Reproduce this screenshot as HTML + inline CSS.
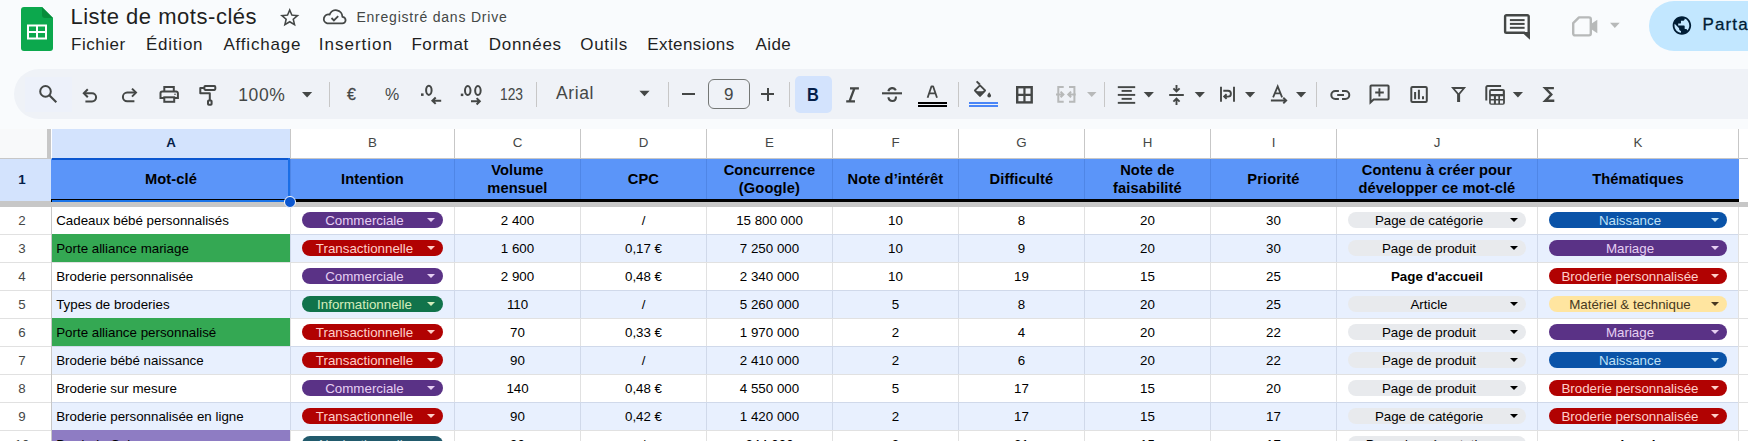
<!DOCTYPE html>
<html><head><meta charset="utf-8"><style>
html,body{margin:0;padding:0;}
body{width:1748px;height:441px;overflow:hidden;position:relative;background:#f9fbfd;font-family:'Liberation Sans', sans-serif;}
.t{position:absolute;white-space:nowrap;line-height:1;}
.c{text-align:center;}
.cc{display:flex;align-items:center;justify-content:center;text-align:center;}
.r{position:absolute;}
.s{position:absolute;overflow:visible;}
</style></head><body>
<svg class="s" style="left:21px;top:7px;" width="32" height="44" viewBox="0 0 32 44">
<path d="M3 0 H21 L32 11 V41 A3 3 0 0 1 29 44 H3 A3 3 0 0 1 0 41 V3 A3 3 0 0 1 3 0 Z" fill="#0ca84d"/>
<path d="M21 0 L32 11 H24 A3 3 0 0 1 21 8 Z" fill="#078c3b"/>
<rect x="6" y="17.5" width="20" height="15" fill="#fff"/>
<rect x="8" y="19.5" width="7" height="4.5" fill="#0ca84d"/>
<rect x="17" y="19.5" width="7" height="4.5" fill="#0ca84d"/>
<rect x="8" y="26" width="7" height="4.5" fill="#0ca84d"/>
<rect x="17" y="26" width="7" height="4.5" fill="#0ca84d"/>
</svg><div class="t" style="left:70.40px;top:6.38px;font-size:22px;color:#1f1f1f;font-weight:normal;letter-spacing:0.523px;">Liste de mots-clés</div><div class="t" style="left:356.40px;top:9.55px;font-size:14px;color:#444746;font-weight:normal;letter-spacing:0.785px;">Enregistré dans Drive</div><div class="t" style="left:71.00px;top:36.31px;font-size:17px;color:#1f1f1f;font-weight:normal;letter-spacing:0.517px;">Fichier</div><div class="t" style="left:146.00px;top:36.31px;font-size:17px;color:#1f1f1f;font-weight:normal;letter-spacing:0.766px;">Édition</div><div class="t" style="left:223.40px;top:36.31px;font-size:17px;color:#1f1f1f;font-weight:normal;letter-spacing:0.825px;">Affichage</div><div class="t" style="left:318.80px;top:36.31px;font-size:17px;color:#1f1f1f;font-weight:normal;letter-spacing:0.989px;">Insertion</div><div class="t" style="left:411.40px;top:36.31px;font-size:17px;color:#1f1f1f;font-weight:normal;letter-spacing:0.6px;">Format</div><div class="t" style="left:488.80px;top:36.31px;font-size:17px;color:#1f1f1f;font-weight:normal;letter-spacing:0.7px;">Données</div><div class="t" style="left:580.20px;top:36.31px;font-size:17px;color:#1f1f1f;font-weight:normal;letter-spacing:0.74px;">Outils</div><div class="t" style="left:647.20px;top:36.31px;font-size:17px;color:#1f1f1f;font-weight:normal;letter-spacing:0.433px;">Extensions</div><div class="t" style="left:755.60px;top:36.31px;font-size:17px;color:#1f1f1f;font-weight:normal;letter-spacing:0.4px;">Aide</div><div class="r" style="left:1648.7px;top:1px;width:140px;height:50px;background:#c2e7ff;border-radius:25px;"></div><div class="t" style="left:1702.60px;top:16.01px;font-size:17px;color:#001d35;font-weight:normal;letter-spacing:1.1px;-webkit-text-stroke:0.3px #001d35;">Partager</div><div class="r" style="left:14px;top:69px;width:1800px;height:50px;background:#eff2f7;border-radius:25px;"></div><div class="r" style="left:25px;top:77px;width:47px;height:35px;background:#edf1fa;"></div><div class="t" style="left:238.20px;top:87.19px;font-size:17.5px;color:#444746;font-weight:normal;letter-spacing:0.633px;">100%</div><div class="r" style="left:329px;top:82px;width:1px;height:25px;background:#c7c7c7;"></div><div class="t" style="left:347.00px;top:87.46px;font-size:16px;color:#444746;font-weight:normal;letter-spacing:4.5px;-webkit-text-stroke:0.3px #444746;">€</div><div class="t" style="left:385.00px;top:87.46px;font-size:16px;color:#444746;font-weight:normal;letter-spacing:-1.8px;">%</div><div class="t" style="left:499.6px;top:86.6px;font-size:15.8px;color:#444746;transform:scaleX(0.875);transform-origin:0 0">123</div><div class="r" style="left:536px;top:82px;width:1px;height:25px;background:#c7c7c7;"></div><div class="t" style="left:556.00px;top:85.39px;font-size:17.5px;color:#444746;font-weight:normal;letter-spacing:0.6px;">Arial</div><div class="r" style="left:668px;top:82px;width:1px;height:25px;background:#c7c7c7;"></div><div class="r" style="left:682px;top:93px;width:13px;height:2px;background:#444746;"></div><div class="r" style="left:708px;top:79px;width:40px;height:28px;border:1px solid #747775;border-radius:6px;"></div><div class="t" style="left:724.00px;top:86.01px;font-size:17px;color:#444746;font-weight:normal;letter-spacing:0.0px;">9</div><div class="r" style="left:761px;top:93px;width:13px;height:2px;background:#444746;"></div><div class="r" style="left:766.5px;top:87.5px;width:2px;height:13px;background:#444746;"></div><div class="r" style="left:789px;top:82px;width:1px;height:25px;background:#c7c7c7;"></div><div class="r" style="left:795px;top:76px;width:37px;height:37px;background:#d3e3fd;border-radius:5px;"></div><div class="t" style="left:806.6px;top:85.2px;font-size:19px;line-height:1;font-weight:bold;color:#041e49;transform:scaleX(0.86);transform-origin:0 0">B</div><div class="r" style="left:918px;top:101.5px;width:29px;height:2px;background:#000;"></div><div class="r" style="left:918px;top:104.5px;width:29px;height:2.5px;background:#000;"></div><div class="r" style="left:958px;top:82px;width:1px;height:25px;background:#c7c7c7;"></div><div class="r" style="left:969px;top:102px;width:29px;height:1.9px;background:#4a86f7;"></div><div class="r" style="left:969px;top:105.2px;width:29px;height:1.7px;background:#4a86f7;"></div><div class="r" style="left:1104px;top:82px;width:1px;height:25px;background:#c7c7c7;"></div><div class="r" style="left:1316px;top:82px;width:1px;height:25px;background:#c7c7c7;"></div><div class="r" style="left:0px;top:129px;width:1748px;height:29px;background:#ffffff;"></div><div class="r" style="left:0px;top:129px;width:47px;height:29px;background:#f8f9fa;"></div><div class="r" style="left:47px;top:129px;width:4px;height:29px;background:#c7c7c7;"></div><div class="r" style="left:52px;top:129px;width:238px;height:29px;background:#d3e3fd;"></div><div class="r" style="left:290px;top:129px;width:1px;height:29px;background:#c7c7c7;"></div><div class="r" style="left:454px;top:129px;width:1px;height:29px;background:#c7c7c7;"></div><div class="r" style="left:580px;top:129px;width:1px;height:29px;background:#c7c7c7;"></div><div class="r" style="left:706px;top:129px;width:1px;height:29px;background:#c7c7c7;"></div><div class="r" style="left:832px;top:129px;width:1px;height:29px;background:#c7c7c7;"></div><div class="r" style="left:958px;top:129px;width:1px;height:29px;background:#c7c7c7;"></div><div class="r" style="left:1084px;top:129px;width:1px;height:29px;background:#c7c7c7;"></div><div class="r" style="left:1210px;top:129px;width:1px;height:29px;background:#c7c7c7;"></div><div class="r" style="left:1336px;top:129px;width:1px;height:29px;background:#c7c7c7;"></div><div class="r" style="left:1537px;top:129px;width:1px;height:29px;background:#c7c7c7;"></div><div class="r" style="left:1738px;top:129px;width:1px;height:29px;background:#c7c7c7;"></div><div class="r" style="left:0px;top:158px;width:1748px;height:1px;background:#c7c7c7;"></div><div class="t c" style="left:51.5px;top:128.0px;width:239px;height:29px;line-height:29px;font-size:13.33px;font-weight:bold;color:#041e49">A</div><div class="t c" style="left:290.5px;top:128.0px;width:164px;height:29px;line-height:29px;font-size:13.33px;font-weight:normal;color:#444746">B</div><div class="t c" style="left:454.5px;top:128.0px;width:126px;height:29px;line-height:29px;font-size:13.33px;font-weight:normal;color:#444746">C</div><div class="t c" style="left:580.5px;top:128.0px;width:126px;height:29px;line-height:29px;font-size:13.33px;font-weight:normal;color:#444746">D</div><div class="t c" style="left:706.5px;top:128.0px;width:126px;height:29px;line-height:29px;font-size:13.33px;font-weight:normal;color:#444746">E</div><div class="t c" style="left:832.5px;top:128.0px;width:126px;height:29px;line-height:29px;font-size:13.33px;font-weight:normal;color:#444746">F</div><div class="t c" style="left:958.5px;top:128.0px;width:126px;height:29px;line-height:29px;font-size:13.33px;font-weight:normal;color:#444746">G</div><div class="t c" style="left:1084.5px;top:128.0px;width:126px;height:29px;line-height:29px;font-size:13.33px;font-weight:normal;color:#444746">H</div><div class="t c" style="left:1210.5px;top:128.0px;width:126px;height:29px;line-height:29px;font-size:13.33px;font-weight:normal;color:#444746">I</div><div class="t c" style="left:1336.5px;top:128.0px;width:201px;height:29px;line-height:29px;font-size:13.33px;font-weight:normal;color:#444746">J</div><div class="t c" style="left:1537.5px;top:128.0px;width:201px;height:29px;line-height:29px;font-size:13.33px;font-weight:normal;color:#444746">K</div><div class="r" style="left:0px;top:159px;width:51px;height:42px;background:#d3e3fd;"></div><div class="t c" style="left:0px;top:157.5px;width:44px;height:43px;line-height:43px;font-size:13.33px;font-weight:bold;color:#041e49">1</div><div class="r" style="left:51px;top:159px;width:1688px;height:43px;background:#5b95f9;"></div><div class="r" style="left:1739px;top:159px;width:9px;height:43px;background:#ffffff;"></div><div class="r" style="left:290px;top:159px;width:1px;height:43px;background:#4f86e6;"></div><div class="r" style="left:454px;top:159px;width:1px;height:43px;background:#4f86e6;"></div><div class="r" style="left:580px;top:159px;width:1px;height:43px;background:#4f86e6;"></div><div class="r" style="left:706px;top:159px;width:1px;height:43px;background:#4f86e6;"></div><div class="r" style="left:832px;top:159px;width:1px;height:43px;background:#4f86e6;"></div><div class="r" style="left:958px;top:159px;width:1px;height:43px;background:#4f86e6;"></div><div class="r" style="left:1084px;top:159px;width:1px;height:43px;background:#4f86e6;"></div><div class="r" style="left:1210px;top:159px;width:1px;height:43px;background:#4f86e6;"></div><div class="r" style="left:1336px;top:159px;width:1px;height:43px;background:#4f86e6;"></div><div class="r" style="left:1537px;top:159px;width:1px;height:43px;background:#4f86e6;"></div><div class="r" style="left:51px;top:199px;width:1688px;height:3px;background:#000;"></div><div class="t cc" style="left:51.4px;top:159.7px;width:239px;height:40px;font-size:14.67px;line-height:17.4px;letter-spacing:0.1px;font-weight:bold;color:#000">Mot-clé</div><div class="t cc" style="left:290.4px;top:159.7px;width:164px;height:40px;font-size:14.67px;line-height:17.4px;letter-spacing:0.1px;font-weight:bold;color:#000">Intention</div><div class="t cc" style="left:454.4px;top:159.7px;width:126px;height:40px;font-size:14.67px;line-height:17.4px;letter-spacing:0.1px;font-weight:bold;color:#000">Volume<br>mensuel</div><div class="t cc" style="left:580.4px;top:159.7px;width:126px;height:40px;font-size:14.67px;line-height:17.4px;letter-spacing:0.1px;font-weight:bold;color:#000">CPC</div><div class="t cc" style="left:706.4px;top:159.7px;width:126px;height:40px;font-size:14.67px;line-height:17.4px;letter-spacing:0.1px;font-weight:bold;color:#000">Concurrence<br>(Google)</div><div class="t cc" style="left:832.4px;top:159.7px;width:126px;height:40px;font-size:14.67px;line-height:17.4px;letter-spacing:0.1px;font-weight:bold;color:#000">Note d’intérêt</div><div class="t cc" style="left:958.4px;top:159.7px;width:126px;height:40px;font-size:14.67px;line-height:17.4px;letter-spacing:0.1px;font-weight:bold;color:#000">Difficulté</div><div class="t cc" style="left:1084.4px;top:159.7px;width:126px;height:40px;font-size:14.67px;line-height:17.4px;letter-spacing:0.1px;font-weight:bold;color:#000">Note de<br>faisabilité</div><div class="t cc" style="left:1210.4px;top:159.7px;width:126px;height:40px;font-size:14.67px;line-height:17.4px;letter-spacing:0.1px;font-weight:bold;color:#000">Priorité</div><div class="t cc" style="left:1336.4px;top:159.7px;width:201px;height:40px;font-size:14.67px;line-height:17.4px;letter-spacing:0.1px;font-weight:bold;color:#000">Contenu à créer pour<br>développer ce mot-clé</div><div class="t cc" style="left:1537.4px;top:159.7px;width:201px;height:40px;font-size:14.67px;line-height:17.4px;letter-spacing:0.1px;font-weight:bold;color:#000">Thématiques</div><div class="r" style="left:0px;top:206px;width:51px;height:28px;background:#ffffff;"></div><div class="r" style="left:0px;top:206px;width:51px;height:1px;background:#e1e1e1;"></div><div class="t cc" style="left:0px;top:207px;width:44px;height:27px;font-size:13.33px;color:#444746">2</div><div class="r" style="left:51px;top:206px;width:1687px;height:28px;background:#ffffff;"></div><div class="r" style="left:290px;top:206px;width:1px;height:28px;background:#e1e1e1;"></div><div class="r" style="left:454px;top:206px;width:1px;height:28px;background:#e1e1e1;"></div><div class="r" style="left:580px;top:206px;width:1px;height:28px;background:#e1e1e1;"></div><div class="r" style="left:706px;top:206px;width:1px;height:28px;background:#e1e1e1;"></div><div class="r" style="left:832px;top:206px;width:1px;height:28px;background:#e1e1e1;"></div><div class="r" style="left:958px;top:206px;width:1px;height:28px;background:#e1e1e1;"></div><div class="r" style="left:1084px;top:206px;width:1px;height:28px;background:#e1e1e1;"></div><div class="r" style="left:1210px;top:206px;width:1px;height:28px;background:#e1e1e1;"></div><div class="r" style="left:1336px;top:206px;width:1px;height:28px;background:#e1e1e1;"></div><div class="r" style="left:1537px;top:206px;width:1px;height:28px;background:#e1e1e1;"></div><div class="r" style="left:51px;top:206px;width:1px;height:28px;background:#c7c7c7;"></div><div class="r" style="left:1738px;top:206px;width:1px;height:28px;background:#e1e1e1;"></div><div class="r" style="left:1739px;top:206px;width:9px;height:28px;background:#ffffff;"></div><div class="t" style="left:56.2px;top:206.5px;height:28px;line-height:28px;font-size:13.33px;color:#000">Cadeaux bébé personnalisés</div><div class="r" style="left:302px;top:212px;width:141px;height:16px;background:#5a3286;border-radius:8px;"></div><div class="t cc" style="left:302px;top:212.5px;width:125px;height:16px;font-size:13.33px;line-height:16px;color:#e6cff2">Commerciale</div><svg class="s" style="left:427px;top:218px" width="8" height="4" viewBox="0 0 8 4"><path d="M0 0 H8 L4 4 Z" fill="#e6cff2"/></svg><div class="t cc" style="left:454.5px;top:207.5px;width:126px;height:27px;font-size:13.33px;color:#000">2 400</div><div class="t cc" style="left:580.5px;top:207.5px;width:126px;height:27px;font-size:13.33px;color:#000">/</div><div class="t cc" style="left:706.5px;top:207.5px;width:126px;height:27px;font-size:13.33px;color:#000">15 800 000</div><div class="t cc" style="left:832.5px;top:207.5px;width:126px;height:27px;font-size:13.33px;color:#000">10</div><div class="t cc" style="left:958.5px;top:207.5px;width:126px;height:27px;font-size:13.33px;color:#000">8</div><div class="t cc" style="left:1084.5px;top:207.5px;width:126px;height:27px;font-size:13.33px;color:#000">20</div><div class="t cc" style="left:1210.5px;top:207.5px;width:126px;height:27px;font-size:13.33px;color:#000">30</div><div class="r" style="left:1348px;top:212px;width:178px;height:16px;background:#e8eaed;border-radius:8px;"></div><div class="t cc" style="left:1348px;top:212.5px;width:162px;height:16px;font-size:13.33px;line-height:16px;color:#000000">Page de catégorie</div><svg class="s" style="left:1510px;top:218px" width="8" height="4" viewBox="0 0 8 4"><path d="M0 0 H8 L4 4 Z" fill="#000000"/></svg><div class="r" style="left:1549px;top:212px;width:178px;height:16px;background:#0a53a8;border-radius:8px;"></div><div class="t cc" style="left:1549px;top:212.5px;width:162px;height:16px;font-size:13.33px;line-height:16px;color:#bfe1f6">Naissance</div><svg class="s" style="left:1711px;top:218px" width="8" height="4" viewBox="0 0 8 4"><path d="M0 0 H8 L4 4 Z" fill="#bfe1f6"/></svg><div class="r" style="left:0px;top:234px;width:51px;height:28px;background:#ffffff;"></div><div class="r" style="left:0px;top:234px;width:51px;height:1px;background:#e1e1e1;"></div><div class="t cc" style="left:0px;top:235px;width:44px;height:27px;font-size:13.33px;color:#444746">3</div><div class="r" style="left:51px;top:234px;width:1687px;height:28px;background:#e8f0fe;"></div><div class="r" style="left:51px;top:234px;width:1687px;height:1px;background:#d0d9ea;"></div><div class="r" style="left:290px;top:234px;width:1px;height:28px;background:#d0d9ea;"></div><div class="r" style="left:454px;top:234px;width:1px;height:28px;background:#d0d9ea;"></div><div class="r" style="left:580px;top:234px;width:1px;height:28px;background:#d0d9ea;"></div><div class="r" style="left:706px;top:234px;width:1px;height:28px;background:#d0d9ea;"></div><div class="r" style="left:832px;top:234px;width:1px;height:28px;background:#d0d9ea;"></div><div class="r" style="left:958px;top:234px;width:1px;height:28px;background:#d0d9ea;"></div><div class="r" style="left:1084px;top:234px;width:1px;height:28px;background:#d0d9ea;"></div><div class="r" style="left:1210px;top:234px;width:1px;height:28px;background:#d0d9ea;"></div><div class="r" style="left:1336px;top:234px;width:1px;height:28px;background:#d0d9ea;"></div><div class="r" style="left:1537px;top:234px;width:1px;height:28px;background:#d0d9ea;"></div><div class="r" style="left:51px;top:234px;width:1px;height:28px;background:#c7c7c7;"></div><div class="r" style="left:1738px;top:234px;width:1px;height:28px;background:#e1e1e1;"></div><div class="r" style="left:1739px;top:234px;width:9px;height:28px;background:#ffffff;"></div><div class="r" style="left:1739px;top:234px;width:9px;height:1px;background:#e1e1e1;"></div><div class="r" style="left:52px;top:234px;width:238px;height:28px;background:#34a853;"></div><div class="t" style="left:56.2px;top:234.5px;height:28px;line-height:28px;font-size:13.33px;color:#000">Porte alliance mariage</div><div class="r" style="left:302px;top:240px;width:141px;height:16px;background:#b10202;border-radius:8px;"></div><div class="t cc" style="left:302px;top:240.5px;width:125px;height:16px;font-size:13.33px;line-height:16px;color:#ffcfc9">Transactionnelle</div><svg class="s" style="left:427px;top:246px" width="8" height="4" viewBox="0 0 8 4"><path d="M0 0 H8 L4 4 Z" fill="#ffcfc9"/></svg><div class="t cc" style="left:454.5px;top:235.5px;width:126px;height:27px;font-size:13.33px;color:#000">1 600</div><div class="t cc" style="left:580.5px;top:235.5px;width:126px;height:27px;font-size:13.33px;color:#000">0,17 €</div><div class="t cc" style="left:706.5px;top:235.5px;width:126px;height:27px;font-size:13.33px;color:#000">7 250 000</div><div class="t cc" style="left:832.5px;top:235.5px;width:126px;height:27px;font-size:13.33px;color:#000">10</div><div class="t cc" style="left:958.5px;top:235.5px;width:126px;height:27px;font-size:13.33px;color:#000">9</div><div class="t cc" style="left:1084.5px;top:235.5px;width:126px;height:27px;font-size:13.33px;color:#000">20</div><div class="t cc" style="left:1210.5px;top:235.5px;width:126px;height:27px;font-size:13.33px;color:#000">30</div><div class="r" style="left:1348px;top:240px;width:178px;height:16px;background:#e8eaed;border-radius:8px;"></div><div class="t cc" style="left:1348px;top:240.5px;width:162px;height:16px;font-size:13.33px;line-height:16px;color:#000000">Page de produit</div><svg class="s" style="left:1510px;top:246px" width="8" height="4" viewBox="0 0 8 4"><path d="M0 0 H8 L4 4 Z" fill="#000000"/></svg><div class="r" style="left:1549px;top:240px;width:178px;height:16px;background:#5a3286;border-radius:8px;"></div><div class="t cc" style="left:1549px;top:240.5px;width:162px;height:16px;font-size:13.33px;line-height:16px;color:#e6cff2">Mariage</div><svg class="s" style="left:1711px;top:246px" width="8" height="4" viewBox="0 0 8 4"><path d="M0 0 H8 L4 4 Z" fill="#e6cff2"/></svg><div class="r" style="left:0px;top:262px;width:51px;height:28px;background:#ffffff;"></div><div class="r" style="left:0px;top:262px;width:51px;height:1px;background:#e1e1e1;"></div><div class="t cc" style="left:0px;top:263px;width:44px;height:27px;font-size:13.33px;color:#444746">4</div><div class="r" style="left:51px;top:262px;width:1687px;height:28px;background:#ffffff;"></div><div class="r" style="left:51px;top:262px;width:1687px;height:1px;background:#e1e1e1;"></div><div class="r" style="left:290px;top:262px;width:1px;height:28px;background:#e1e1e1;"></div><div class="r" style="left:454px;top:262px;width:1px;height:28px;background:#e1e1e1;"></div><div class="r" style="left:580px;top:262px;width:1px;height:28px;background:#e1e1e1;"></div><div class="r" style="left:706px;top:262px;width:1px;height:28px;background:#e1e1e1;"></div><div class="r" style="left:832px;top:262px;width:1px;height:28px;background:#e1e1e1;"></div><div class="r" style="left:958px;top:262px;width:1px;height:28px;background:#e1e1e1;"></div><div class="r" style="left:1084px;top:262px;width:1px;height:28px;background:#e1e1e1;"></div><div class="r" style="left:1210px;top:262px;width:1px;height:28px;background:#e1e1e1;"></div><div class="r" style="left:1336px;top:262px;width:1px;height:28px;background:#e1e1e1;"></div><div class="r" style="left:1537px;top:262px;width:1px;height:28px;background:#e1e1e1;"></div><div class="r" style="left:51px;top:262px;width:1px;height:28px;background:#c7c7c7;"></div><div class="r" style="left:1738px;top:262px;width:1px;height:28px;background:#e1e1e1;"></div><div class="r" style="left:1739px;top:262px;width:9px;height:28px;background:#ffffff;"></div><div class="r" style="left:1739px;top:262px;width:9px;height:1px;background:#e1e1e1;"></div><div class="t" style="left:56.2px;top:262.5px;height:28px;line-height:28px;font-size:13.33px;color:#000">Broderie personnalisée</div><div class="r" style="left:302px;top:268px;width:141px;height:16px;background:#5a3286;border-radius:8px;"></div><div class="t cc" style="left:302px;top:268.5px;width:125px;height:16px;font-size:13.33px;line-height:16px;color:#e6cff2">Commerciale</div><svg class="s" style="left:427px;top:274px" width="8" height="4" viewBox="0 0 8 4"><path d="M0 0 H8 L4 4 Z" fill="#e6cff2"/></svg><div class="t cc" style="left:454.5px;top:263.5px;width:126px;height:27px;font-size:13.33px;color:#000">2 900</div><div class="t cc" style="left:580.5px;top:263.5px;width:126px;height:27px;font-size:13.33px;color:#000">0,48 €</div><div class="t cc" style="left:706.5px;top:263.5px;width:126px;height:27px;font-size:13.33px;color:#000">2 340 000</div><div class="t cc" style="left:832.5px;top:263.5px;width:126px;height:27px;font-size:13.33px;color:#000">10</div><div class="t cc" style="left:958.5px;top:263.5px;width:126px;height:27px;font-size:13.33px;color:#000">19</div><div class="t cc" style="left:1084.5px;top:263.5px;width:126px;height:27px;font-size:13.33px;color:#000">15</div><div class="t cc" style="left:1210.5px;top:263.5px;width:126px;height:27px;font-size:13.33px;color:#000">25</div><div class="t cc" style="left:1336.5px;top:263.5px;width:201px;height:27px;font-size:13.33px;font-weight:bold;color:#000">Page d'accueil</div><div class="r" style="left:1549px;top:268px;width:178px;height:16px;background:#b10202;border-radius:8px;"></div><div class="t cc" style="left:1549px;top:268.5px;width:162px;height:16px;font-size:13.33px;line-height:16px;color:#ffcfc9">Broderie personnalisée</div><svg class="s" style="left:1711px;top:274px" width="8" height="4" viewBox="0 0 8 4"><path d="M0 0 H8 L4 4 Z" fill="#ffcfc9"/></svg><div class="r" style="left:0px;top:290px;width:51px;height:28px;background:#ffffff;"></div><div class="r" style="left:0px;top:290px;width:51px;height:1px;background:#e1e1e1;"></div><div class="t cc" style="left:0px;top:291px;width:44px;height:27px;font-size:13.33px;color:#444746">5</div><div class="r" style="left:51px;top:290px;width:1687px;height:28px;background:#e8f0fe;"></div><div class="r" style="left:51px;top:290px;width:1687px;height:1px;background:#d0d9ea;"></div><div class="r" style="left:290px;top:290px;width:1px;height:28px;background:#d0d9ea;"></div><div class="r" style="left:454px;top:290px;width:1px;height:28px;background:#d0d9ea;"></div><div class="r" style="left:580px;top:290px;width:1px;height:28px;background:#d0d9ea;"></div><div class="r" style="left:706px;top:290px;width:1px;height:28px;background:#d0d9ea;"></div><div class="r" style="left:832px;top:290px;width:1px;height:28px;background:#d0d9ea;"></div><div class="r" style="left:958px;top:290px;width:1px;height:28px;background:#d0d9ea;"></div><div class="r" style="left:1084px;top:290px;width:1px;height:28px;background:#d0d9ea;"></div><div class="r" style="left:1210px;top:290px;width:1px;height:28px;background:#d0d9ea;"></div><div class="r" style="left:1336px;top:290px;width:1px;height:28px;background:#d0d9ea;"></div><div class="r" style="left:1537px;top:290px;width:1px;height:28px;background:#d0d9ea;"></div><div class="r" style="left:51px;top:290px;width:1px;height:28px;background:#c7c7c7;"></div><div class="r" style="left:1738px;top:290px;width:1px;height:28px;background:#e1e1e1;"></div><div class="r" style="left:1739px;top:290px;width:9px;height:28px;background:#ffffff;"></div><div class="r" style="left:1739px;top:290px;width:9px;height:1px;background:#e1e1e1;"></div><div class="t" style="left:56.2px;top:290.5px;height:28px;line-height:28px;font-size:13.33px;color:#000">Types de broderies</div><div class="r" style="left:302px;top:296px;width:141px;height:16px;background:#11734b;border-radius:8px;"></div><div class="t cc" style="left:302px;top:296.5px;width:125px;height:16px;font-size:13.33px;line-height:16px;color:#d4edbc">Informationnelle</div><svg class="s" style="left:427px;top:302px" width="8" height="4" viewBox="0 0 8 4"><path d="M0 0 H8 L4 4 Z" fill="#d4edbc"/></svg><div class="t cc" style="left:454.5px;top:291.5px;width:126px;height:27px;font-size:13.33px;color:#000">110</div><div class="t cc" style="left:580.5px;top:291.5px;width:126px;height:27px;font-size:13.33px;color:#000">/</div><div class="t cc" style="left:706.5px;top:291.5px;width:126px;height:27px;font-size:13.33px;color:#000">5 260 000</div><div class="t cc" style="left:832.5px;top:291.5px;width:126px;height:27px;font-size:13.33px;color:#000">5</div><div class="t cc" style="left:958.5px;top:291.5px;width:126px;height:27px;font-size:13.33px;color:#000">8</div><div class="t cc" style="left:1084.5px;top:291.5px;width:126px;height:27px;font-size:13.33px;color:#000">20</div><div class="t cc" style="left:1210.5px;top:291.5px;width:126px;height:27px;font-size:13.33px;color:#000">25</div><div class="r" style="left:1348px;top:296px;width:178px;height:16px;background:#e8eaed;border-radius:8px;"></div><div class="t cc" style="left:1348px;top:296.5px;width:162px;height:16px;font-size:13.33px;line-height:16px;color:#000000">Article</div><svg class="s" style="left:1510px;top:302px" width="8" height="4" viewBox="0 0 8 4"><path d="M0 0 H8 L4 4 Z" fill="#000000"/></svg><div class="r" style="left:1549px;top:296px;width:178px;height:16px;background:#ffe5a0;border-radius:8px;"></div><div class="t cc" style="left:1549px;top:296.5px;width:162px;height:16px;font-size:13.33px;line-height:16px;color:#473821">Matériel & technique</div><svg class="s" style="left:1711px;top:302px" width="8" height="4" viewBox="0 0 8 4"><path d="M0 0 H8 L4 4 Z" fill="#473821"/></svg><div class="r" style="left:0px;top:318px;width:51px;height:28px;background:#ffffff;"></div><div class="r" style="left:0px;top:318px;width:51px;height:1px;background:#e1e1e1;"></div><div class="t cc" style="left:0px;top:319px;width:44px;height:27px;font-size:13.33px;color:#444746">6</div><div class="r" style="left:51px;top:318px;width:1687px;height:28px;background:#ffffff;"></div><div class="r" style="left:51px;top:318px;width:1687px;height:1px;background:#e1e1e1;"></div><div class="r" style="left:290px;top:318px;width:1px;height:28px;background:#e1e1e1;"></div><div class="r" style="left:454px;top:318px;width:1px;height:28px;background:#e1e1e1;"></div><div class="r" style="left:580px;top:318px;width:1px;height:28px;background:#e1e1e1;"></div><div class="r" style="left:706px;top:318px;width:1px;height:28px;background:#e1e1e1;"></div><div class="r" style="left:832px;top:318px;width:1px;height:28px;background:#e1e1e1;"></div><div class="r" style="left:958px;top:318px;width:1px;height:28px;background:#e1e1e1;"></div><div class="r" style="left:1084px;top:318px;width:1px;height:28px;background:#e1e1e1;"></div><div class="r" style="left:1210px;top:318px;width:1px;height:28px;background:#e1e1e1;"></div><div class="r" style="left:1336px;top:318px;width:1px;height:28px;background:#e1e1e1;"></div><div class="r" style="left:1537px;top:318px;width:1px;height:28px;background:#e1e1e1;"></div><div class="r" style="left:51px;top:318px;width:1px;height:28px;background:#c7c7c7;"></div><div class="r" style="left:1738px;top:318px;width:1px;height:28px;background:#e1e1e1;"></div><div class="r" style="left:1739px;top:318px;width:9px;height:28px;background:#ffffff;"></div><div class="r" style="left:1739px;top:318px;width:9px;height:1px;background:#e1e1e1;"></div><div class="r" style="left:52px;top:318px;width:238px;height:28px;background:#34a853;"></div><div class="t" style="left:56.2px;top:318.5px;height:28px;line-height:28px;font-size:13.33px;color:#000">Porte alliance personnalisé</div><div class="r" style="left:302px;top:324px;width:141px;height:16px;background:#b10202;border-radius:8px;"></div><div class="t cc" style="left:302px;top:324.5px;width:125px;height:16px;font-size:13.33px;line-height:16px;color:#ffcfc9">Transactionnelle</div><svg class="s" style="left:427px;top:330px" width="8" height="4" viewBox="0 0 8 4"><path d="M0 0 H8 L4 4 Z" fill="#ffcfc9"/></svg><div class="t cc" style="left:454.5px;top:319.5px;width:126px;height:27px;font-size:13.33px;color:#000">70</div><div class="t cc" style="left:580.5px;top:319.5px;width:126px;height:27px;font-size:13.33px;color:#000">0,33 €</div><div class="t cc" style="left:706.5px;top:319.5px;width:126px;height:27px;font-size:13.33px;color:#000">1 970 000</div><div class="t cc" style="left:832.5px;top:319.5px;width:126px;height:27px;font-size:13.33px;color:#000">2</div><div class="t cc" style="left:958.5px;top:319.5px;width:126px;height:27px;font-size:13.33px;color:#000">4</div><div class="t cc" style="left:1084.5px;top:319.5px;width:126px;height:27px;font-size:13.33px;color:#000">20</div><div class="t cc" style="left:1210.5px;top:319.5px;width:126px;height:27px;font-size:13.33px;color:#000">22</div><div class="r" style="left:1348px;top:324px;width:178px;height:16px;background:#e8eaed;border-radius:8px;"></div><div class="t cc" style="left:1348px;top:324.5px;width:162px;height:16px;font-size:13.33px;line-height:16px;color:#000000">Page de produit</div><svg class="s" style="left:1510px;top:330px" width="8" height="4" viewBox="0 0 8 4"><path d="M0 0 H8 L4 4 Z" fill="#000000"/></svg><div class="r" style="left:1549px;top:324px;width:178px;height:16px;background:#5a3286;border-radius:8px;"></div><div class="t cc" style="left:1549px;top:324.5px;width:162px;height:16px;font-size:13.33px;line-height:16px;color:#e6cff2">Mariage</div><svg class="s" style="left:1711px;top:330px" width="8" height="4" viewBox="0 0 8 4"><path d="M0 0 H8 L4 4 Z" fill="#e6cff2"/></svg><div class="r" style="left:0px;top:346px;width:51px;height:28px;background:#ffffff;"></div><div class="r" style="left:0px;top:346px;width:51px;height:1px;background:#e1e1e1;"></div><div class="t cc" style="left:0px;top:347px;width:44px;height:27px;font-size:13.33px;color:#444746">7</div><div class="r" style="left:51px;top:346px;width:1687px;height:28px;background:#e8f0fe;"></div><div class="r" style="left:51px;top:346px;width:1687px;height:1px;background:#d0d9ea;"></div><div class="r" style="left:290px;top:346px;width:1px;height:28px;background:#d0d9ea;"></div><div class="r" style="left:454px;top:346px;width:1px;height:28px;background:#d0d9ea;"></div><div class="r" style="left:580px;top:346px;width:1px;height:28px;background:#d0d9ea;"></div><div class="r" style="left:706px;top:346px;width:1px;height:28px;background:#d0d9ea;"></div><div class="r" style="left:832px;top:346px;width:1px;height:28px;background:#d0d9ea;"></div><div class="r" style="left:958px;top:346px;width:1px;height:28px;background:#d0d9ea;"></div><div class="r" style="left:1084px;top:346px;width:1px;height:28px;background:#d0d9ea;"></div><div class="r" style="left:1210px;top:346px;width:1px;height:28px;background:#d0d9ea;"></div><div class="r" style="left:1336px;top:346px;width:1px;height:28px;background:#d0d9ea;"></div><div class="r" style="left:1537px;top:346px;width:1px;height:28px;background:#d0d9ea;"></div><div class="r" style="left:51px;top:346px;width:1px;height:28px;background:#c7c7c7;"></div><div class="r" style="left:1738px;top:346px;width:1px;height:28px;background:#e1e1e1;"></div><div class="r" style="left:1739px;top:346px;width:9px;height:28px;background:#ffffff;"></div><div class="r" style="left:1739px;top:346px;width:9px;height:1px;background:#e1e1e1;"></div><div class="t" style="left:56.2px;top:346.5px;height:28px;line-height:28px;font-size:13.33px;color:#000">Broderie bébé naissance</div><div class="r" style="left:302px;top:352px;width:141px;height:16px;background:#b10202;border-radius:8px;"></div><div class="t cc" style="left:302px;top:352.5px;width:125px;height:16px;font-size:13.33px;line-height:16px;color:#ffcfc9">Transactionnelle</div><svg class="s" style="left:427px;top:358px" width="8" height="4" viewBox="0 0 8 4"><path d="M0 0 H8 L4 4 Z" fill="#ffcfc9"/></svg><div class="t cc" style="left:454.5px;top:347.5px;width:126px;height:27px;font-size:13.33px;color:#000">90</div><div class="t cc" style="left:580.5px;top:347.5px;width:126px;height:27px;font-size:13.33px;color:#000">/</div><div class="t cc" style="left:706.5px;top:347.5px;width:126px;height:27px;font-size:13.33px;color:#000">2 410 000</div><div class="t cc" style="left:832.5px;top:347.5px;width:126px;height:27px;font-size:13.33px;color:#000">2</div><div class="t cc" style="left:958.5px;top:347.5px;width:126px;height:27px;font-size:13.33px;color:#000">6</div><div class="t cc" style="left:1084.5px;top:347.5px;width:126px;height:27px;font-size:13.33px;color:#000">20</div><div class="t cc" style="left:1210.5px;top:347.5px;width:126px;height:27px;font-size:13.33px;color:#000">22</div><div class="r" style="left:1348px;top:352px;width:178px;height:16px;background:#e8eaed;border-radius:8px;"></div><div class="t cc" style="left:1348px;top:352.5px;width:162px;height:16px;font-size:13.33px;line-height:16px;color:#000000">Page de produit</div><svg class="s" style="left:1510px;top:358px" width="8" height="4" viewBox="0 0 8 4"><path d="M0 0 H8 L4 4 Z" fill="#000000"/></svg><div class="r" style="left:1549px;top:352px;width:178px;height:16px;background:#0a53a8;border-radius:8px;"></div><div class="t cc" style="left:1549px;top:352.5px;width:162px;height:16px;font-size:13.33px;line-height:16px;color:#bfe1f6">Naissance</div><svg class="s" style="left:1711px;top:358px" width="8" height="4" viewBox="0 0 8 4"><path d="M0 0 H8 L4 4 Z" fill="#bfe1f6"/></svg><div class="r" style="left:0px;top:374px;width:51px;height:28px;background:#ffffff;"></div><div class="r" style="left:0px;top:374px;width:51px;height:1px;background:#e1e1e1;"></div><div class="t cc" style="left:0px;top:375px;width:44px;height:27px;font-size:13.33px;color:#444746">8</div><div class="r" style="left:51px;top:374px;width:1687px;height:28px;background:#ffffff;"></div><div class="r" style="left:51px;top:374px;width:1687px;height:1px;background:#e1e1e1;"></div><div class="r" style="left:290px;top:374px;width:1px;height:28px;background:#e1e1e1;"></div><div class="r" style="left:454px;top:374px;width:1px;height:28px;background:#e1e1e1;"></div><div class="r" style="left:580px;top:374px;width:1px;height:28px;background:#e1e1e1;"></div><div class="r" style="left:706px;top:374px;width:1px;height:28px;background:#e1e1e1;"></div><div class="r" style="left:832px;top:374px;width:1px;height:28px;background:#e1e1e1;"></div><div class="r" style="left:958px;top:374px;width:1px;height:28px;background:#e1e1e1;"></div><div class="r" style="left:1084px;top:374px;width:1px;height:28px;background:#e1e1e1;"></div><div class="r" style="left:1210px;top:374px;width:1px;height:28px;background:#e1e1e1;"></div><div class="r" style="left:1336px;top:374px;width:1px;height:28px;background:#e1e1e1;"></div><div class="r" style="left:1537px;top:374px;width:1px;height:28px;background:#e1e1e1;"></div><div class="r" style="left:51px;top:374px;width:1px;height:28px;background:#c7c7c7;"></div><div class="r" style="left:1738px;top:374px;width:1px;height:28px;background:#e1e1e1;"></div><div class="r" style="left:1739px;top:374px;width:9px;height:28px;background:#ffffff;"></div><div class="r" style="left:1739px;top:374px;width:9px;height:1px;background:#e1e1e1;"></div><div class="t" style="left:56.2px;top:374.5px;height:28px;line-height:28px;font-size:13.33px;color:#000">Broderie sur mesure</div><div class="r" style="left:302px;top:380px;width:141px;height:16px;background:#5a3286;border-radius:8px;"></div><div class="t cc" style="left:302px;top:380.5px;width:125px;height:16px;font-size:13.33px;line-height:16px;color:#e6cff2">Commerciale</div><svg class="s" style="left:427px;top:386px" width="8" height="4" viewBox="0 0 8 4"><path d="M0 0 H8 L4 4 Z" fill="#e6cff2"/></svg><div class="t cc" style="left:454.5px;top:375.5px;width:126px;height:27px;font-size:13.33px;color:#000">140</div><div class="t cc" style="left:580.5px;top:375.5px;width:126px;height:27px;font-size:13.33px;color:#000">0,48 €</div><div class="t cc" style="left:706.5px;top:375.5px;width:126px;height:27px;font-size:13.33px;color:#000">4 550 000</div><div class="t cc" style="left:832.5px;top:375.5px;width:126px;height:27px;font-size:13.33px;color:#000">5</div><div class="t cc" style="left:958.5px;top:375.5px;width:126px;height:27px;font-size:13.33px;color:#000">17</div><div class="t cc" style="left:1084.5px;top:375.5px;width:126px;height:27px;font-size:13.33px;color:#000">15</div><div class="t cc" style="left:1210.5px;top:375.5px;width:126px;height:27px;font-size:13.33px;color:#000">20</div><div class="r" style="left:1348px;top:380px;width:178px;height:16px;background:#e8eaed;border-radius:8px;"></div><div class="t cc" style="left:1348px;top:380.5px;width:162px;height:16px;font-size:13.33px;line-height:16px;color:#000000">Page de produit</div><svg class="s" style="left:1510px;top:386px" width="8" height="4" viewBox="0 0 8 4"><path d="M0 0 H8 L4 4 Z" fill="#000000"/></svg><div class="r" style="left:1549px;top:380px;width:178px;height:16px;background:#b10202;border-radius:8px;"></div><div class="t cc" style="left:1549px;top:380.5px;width:162px;height:16px;font-size:13.33px;line-height:16px;color:#ffcfc9">Broderie personnalisée</div><svg class="s" style="left:1711px;top:386px" width="8" height="4" viewBox="0 0 8 4"><path d="M0 0 H8 L4 4 Z" fill="#ffcfc9"/></svg><div class="r" style="left:0px;top:402px;width:51px;height:28px;background:#ffffff;"></div><div class="r" style="left:0px;top:402px;width:51px;height:1px;background:#e1e1e1;"></div><div class="t cc" style="left:0px;top:403px;width:44px;height:27px;font-size:13.33px;color:#444746">9</div><div class="r" style="left:51px;top:402px;width:1687px;height:28px;background:#e8f0fe;"></div><div class="r" style="left:51px;top:402px;width:1687px;height:1px;background:#d0d9ea;"></div><div class="r" style="left:290px;top:402px;width:1px;height:28px;background:#d0d9ea;"></div><div class="r" style="left:454px;top:402px;width:1px;height:28px;background:#d0d9ea;"></div><div class="r" style="left:580px;top:402px;width:1px;height:28px;background:#d0d9ea;"></div><div class="r" style="left:706px;top:402px;width:1px;height:28px;background:#d0d9ea;"></div><div class="r" style="left:832px;top:402px;width:1px;height:28px;background:#d0d9ea;"></div><div class="r" style="left:958px;top:402px;width:1px;height:28px;background:#d0d9ea;"></div><div class="r" style="left:1084px;top:402px;width:1px;height:28px;background:#d0d9ea;"></div><div class="r" style="left:1210px;top:402px;width:1px;height:28px;background:#d0d9ea;"></div><div class="r" style="left:1336px;top:402px;width:1px;height:28px;background:#d0d9ea;"></div><div class="r" style="left:1537px;top:402px;width:1px;height:28px;background:#d0d9ea;"></div><div class="r" style="left:51px;top:402px;width:1px;height:28px;background:#c7c7c7;"></div><div class="r" style="left:1738px;top:402px;width:1px;height:28px;background:#e1e1e1;"></div><div class="r" style="left:1739px;top:402px;width:9px;height:28px;background:#ffffff;"></div><div class="r" style="left:1739px;top:402px;width:9px;height:1px;background:#e1e1e1;"></div><div class="t" style="left:56.2px;top:402.5px;height:28px;line-height:28px;font-size:13.33px;color:#000">Broderie personnalisée en ligne</div><div class="r" style="left:302px;top:408px;width:141px;height:16px;background:#b10202;border-radius:8px;"></div><div class="t cc" style="left:302px;top:408.5px;width:125px;height:16px;font-size:13.33px;line-height:16px;color:#ffcfc9">Transactionnelle</div><svg class="s" style="left:427px;top:414px" width="8" height="4" viewBox="0 0 8 4"><path d="M0 0 H8 L4 4 Z" fill="#ffcfc9"/></svg><div class="t cc" style="left:454.5px;top:403.5px;width:126px;height:27px;font-size:13.33px;color:#000">90</div><div class="t cc" style="left:580.5px;top:403.5px;width:126px;height:27px;font-size:13.33px;color:#000">0,42 €</div><div class="t cc" style="left:706.5px;top:403.5px;width:126px;height:27px;font-size:13.33px;color:#000">1 420 000</div><div class="t cc" style="left:832.5px;top:403.5px;width:126px;height:27px;font-size:13.33px;color:#000">2</div><div class="t cc" style="left:958.5px;top:403.5px;width:126px;height:27px;font-size:13.33px;color:#000">17</div><div class="t cc" style="left:1084.5px;top:403.5px;width:126px;height:27px;font-size:13.33px;color:#000">15</div><div class="t cc" style="left:1210.5px;top:403.5px;width:126px;height:27px;font-size:13.33px;color:#000">17</div><div class="r" style="left:1348px;top:408px;width:178px;height:16px;background:#e8eaed;border-radius:8px;"></div><div class="t cc" style="left:1348px;top:408.5px;width:162px;height:16px;font-size:13.33px;line-height:16px;color:#000000">Page de catégorie</div><svg class="s" style="left:1510px;top:414px" width="8" height="4" viewBox="0 0 8 4"><path d="M0 0 H8 L4 4 Z" fill="#000000"/></svg><div class="r" style="left:1549px;top:408px;width:178px;height:16px;background:#b10202;border-radius:8px;"></div><div class="t cc" style="left:1549px;top:408.5px;width:162px;height:16px;font-size:13.33px;line-height:16px;color:#ffcfc9">Broderie personnalisée</div><svg class="s" style="left:1711px;top:414px" width="8" height="4" viewBox="0 0 8 4"><path d="M0 0 H8 L4 4 Z" fill="#ffcfc9"/></svg><div class="r" style="left:0px;top:430px;width:51px;height:28px;background:#ffffff;"></div><div class="r" style="left:0px;top:430px;width:51px;height:1px;background:#e1e1e1;"></div><div class="t cc" style="left:0px;top:431px;width:44px;height:27px;font-size:13.33px;color:#444746">10</div><div class="r" style="left:51px;top:430px;width:1687px;height:28px;background:#ffffff;"></div><div class="r" style="left:51px;top:430px;width:1687px;height:1px;background:#e1e1e1;"></div><div class="r" style="left:290px;top:430px;width:1px;height:28px;background:#e1e1e1;"></div><div class="r" style="left:454px;top:430px;width:1px;height:28px;background:#e1e1e1;"></div><div class="r" style="left:580px;top:430px;width:1px;height:28px;background:#e1e1e1;"></div><div class="r" style="left:706px;top:430px;width:1px;height:28px;background:#e1e1e1;"></div><div class="r" style="left:832px;top:430px;width:1px;height:28px;background:#e1e1e1;"></div><div class="r" style="left:958px;top:430px;width:1px;height:28px;background:#e1e1e1;"></div><div class="r" style="left:1084px;top:430px;width:1px;height:28px;background:#e1e1e1;"></div><div class="r" style="left:1210px;top:430px;width:1px;height:28px;background:#e1e1e1;"></div><div class="r" style="left:1336px;top:430px;width:1px;height:28px;background:#e1e1e1;"></div><div class="r" style="left:1537px;top:430px;width:1px;height:28px;background:#e1e1e1;"></div><div class="r" style="left:51px;top:430px;width:1px;height:28px;background:#c7c7c7;"></div><div class="r" style="left:1738px;top:430px;width:1px;height:28px;background:#e1e1e1;"></div><div class="r" style="left:1739px;top:430px;width:9px;height:28px;background:#ffffff;"></div><div class="r" style="left:1739px;top:430px;width:9px;height:1px;background:#e1e1e1;"></div><div class="r" style="left:52px;top:430px;width:238px;height:28px;background:#8e7cc3;"></div><div class="t" style="left:56.2px;top:430.5px;height:28px;line-height:28px;font-size:13.33px;color:#000">Broderie Colmar</div><div class="r" style="left:302px;top:436px;width:141px;height:16px;background:#215a6c;border-radius:8px;"></div><div class="t cc" style="left:302px;top:436.5px;width:125px;height:16px;font-size:13.33px;line-height:16px;color:#c6dbe1">Navigationnelle</div><svg class="s" style="left:427px;top:442px" width="8" height="4" viewBox="0 0 8 4"><path d="M0 0 H8 L4 4 Z" fill="#c6dbe1"/></svg><div class="t cc" style="left:454.5px;top:431.5px;width:126px;height:27px;font-size:13.33px;color:#000">90</div><div class="t cc" style="left:580.5px;top:431.5px;width:126px;height:27px;font-size:13.33px;color:#000">/</div><div class="t cc" style="left:706.5px;top:431.5px;width:126px;height:27px;font-size:13.33px;color:#000">244 000</div><div class="t cc" style="left:832.5px;top:431.5px;width:126px;height:27px;font-size:13.33px;color:#000">3</div><div class="t cc" style="left:958.5px;top:431.5px;width:126px;height:27px;font-size:13.33px;color:#000">21</div><div class="t cc" style="left:1084.5px;top:431.5px;width:126px;height:27px;font-size:13.33px;color:#000">15</div><div class="t cc" style="left:1210.5px;top:431.5px;width:126px;height:27px;font-size:13.33px;color:#000">17</div><div class="r" style="left:1348px;top:436px;width:178px;height:16px;background:#e8eaed;border-radius:8px;"></div><div class="t cc" style="left:1348px;top:436.5px;width:162px;height:16px;font-size:13.33px;line-height:16px;color:#000000">Page de présentation</div><svg class="s" style="left:1510px;top:442px" width="8" height="4" viewBox="0 0 8 4"><path d="M0 0 H8 L4 4 Z" fill="#000000"/></svg><div class="t cc" style="left:1537.5px;top:431.5px;width:201px;height:27px;font-size:13.33px;font-weight:bold;color:#000">Local</div><div class="r" style="left:0px;top:201px;width:51px;height:6px;background:#c7c7c7;"></div><div class="r" style="left:51px;top:202px;width:1697px;height:5px;background:#c7c7c7;"></div><div class="r" style="left:52px;top:158px;width:238px;height:2px;background:#0b57d0;"></div><div class="r" style="left:288px;top:158px;width:2px;height:44px;background:#1a6ee6;"></div><div class="r" style="left:52px;top:200px;width:238px;height:2px;background:#1a73e8;"></div><div class="r" style="left:284px;top:196px;width:12px;height:12px;border-radius:50%;background:#0b57d0;border:1px solid #fff;box-sizing:border-box;"></div>
<svg style="position:absolute;left:0;top:0" width="1748" height="441" viewBox="0 0 1748 441"><path transform="translate(278.06 6.19) scale(0.97 0.953)" d="M22 9.24l-7.19-.62L12 2 9.19 8.63 2 9.24l5.46 4.73L5.82 21 12 17.27 18.18 21l-1.63-7.03L22 9.24zM12 15.4l-3.76 2.27 1-4.28-3.32-2.88 4.38-.38L12 6.1l1.71 4.04 4.38.38-3.32 2.88 1 4.28L12 15.4z" fill="#444746"/><path d="M327.2 23.4 H342.2 A3.3 3.3 0 0 0 342.4 16.8 A6.6 6.6 0 0 0 329.6 14.6 A4.4 4.4 0 0 0 327.2 23.4 Z" fill="none" stroke="#444746" stroke-width="1.8" stroke-linejoin="round"/><path d="M331.5 18 L333.9 20.4 L338.2 16.1" fill="none" stroke="#444746" stroke-width="1.8"/><path d="M1506.4 15.2 H1527.4 A1.3 1.3 0 0 1 1528.7 16.5 V37 L1524.2 32.8 H1506.4 A1.3 1.3 0 0 1 1505.1 31.5 V16.5 A1.3 1.3 0 0 1 1506.4 15.2 Z" fill="none" stroke="#444746" stroke-width="2.4" stroke-linejoin="miter"/><path d="M1524.4 32 L1529.9 39 V32 Z" fill="#444746"/><rect x="1509.9" y="19.1" width="14.7" height="2" fill="#444746"/><rect x="1509.9" y="22.9" width="14.7" height="2" fill="#444746"/><rect x="1509.9" y="26.8" width="14.7" height="2" fill="#444746"/><path d="M1579 17.4 H1589 A1.8 1.8 0 0 1 1590.8 19.2 V33.6 A1.8 1.8 0 0 1 1589 35.4 H1575 A1.8 1.8 0 0 1 1573.2 33.6 V23.2 Z" fill="none" stroke="#b7b9b9" stroke-width="2.4" stroke-linejoin="round"/><path d="M1591 24 L1597.3 19.8 V33.3 L1591 29 Z" fill="#b7b9b9"/><path d="M1610 22.7 H1619.7 L1614.85 28 Z" fill="#b7b9b9"/><path transform="translate(1670.8 14.3) scale(0.925)" d="M12 2C6.48 2 2 6.48 2 12s4.48 10 10 10 10-4.48 10-10S17.52 2 12 2zm-1 17.93c-3.95-.49-7-3.85-7-7.93 0-.62.08-1.21.21-1.79L9 15v1c0 1.1.9 2 2 2v1.93zm6.9-2.54c-.26-.81-1-1.39-1.9-1.39h-1v-3c0-.55-.45-1-1-1H8v-2h2c.55 0 1-.45 1-1V7h2c1.1 0 2-.9 2-2v-.41c2.93 1.19 5 4.06 5 7.41 0 2.08-.8 3.97-2.1 5.39z" fill="#001d35"/><circle cx="45.5" cy="91.4" r="5.3" fill="none" stroke="#444746" stroke-width="2"/><path d="M49.3 95.3 L56.3 102.3" stroke="#444746" stroke-width="2.1"/><path d="M87.8 89.2 L83.8 93.2 L87.8 97.2" fill="none" stroke="#444746" stroke-width="2"/><path d="M84 93.2 H92 A4.1 4.1 0 0 1 92 101.4 H85.4" fill="none" stroke="#444746" stroke-width="2"/><path d="M132 88.6 L136 92.6 L132 96.6" fill="none" stroke="#444746" stroke-width="2"/><path d="M135.8 92.6 H127.2 A4.3 4.3 0 0 0 127.2 101.2 H134.4" fill="none" stroke="#444746" stroke-width="2"/><path d="M164.3 91.2 V87.1 H173.8 V91.2" fill="none" stroke="#444746" stroke-width="2"/><path d="M164 98 H160.5 V93.2 A1.8 1.8 0 0 1 162.3 91.4 H176.1 A1.8 1.8 0 0 1 177.9 93.2 V98 H174.5" fill="none" stroke="#444746" stroke-width="2"/><rect x="164.3" y="97.3" width="9.9" height="4.5" fill="none" stroke="#444746" stroke-width="2"/><circle cx="175" cy="94.3" r="0.8" fill="#444746"/><rect x="204.4" y="86.1" width="10.9" height="3.8" rx="0.8" fill="none" stroke="#444746" stroke-width="2"/><path d="M204.4 88 H200.3 V93.3 H209.8 V100" fill="none" stroke="#444746" stroke-width="2" stroke-linejoin="round"/><rect x="208" y="100.5" width="3.6" height="4.3" rx="0.8" fill="none" stroke="#444746" stroke-width="2"/><path d="M302 92 H312.2 L307.1 97.4 Z" fill="#444746"/><rect x="421" y="93.4" width="2.6" height="2.5" fill="#444746"/><ellipse cx="428.85" cy="90.35" rx="2.75" ry="4.55" fill="none" stroke="#444746" stroke-width="2"/><path d="M441.2 100.7 H432.5 M435.7 97.5 L432.4 100.7 L435.7 103.9" fill="none" stroke="#444746" stroke-width="2"/><rect x="460.8" y="93.6" width="2.5" height="2.5" fill="#444746"/><ellipse cx="467.75" cy="90.6" rx="2.75" ry="4.5" fill="none" stroke="#444746" stroke-width="2"/><ellipse cx="477.9" cy="90.6" rx="2.75" ry="4.5" fill="none" stroke="#444746" stroke-width="2"/><path d="M471 101.3 H479.8 M476.6 98.1 L479.8 101.3 L476.6 104.5" fill="none" stroke="#444746" stroke-width="2"/><path d="M639.4 90.8 H649.6 L644.5 96.2 Z" fill="#444746"/><path d="M850 88.4 H858.9 M846.2 101.4 H855 M854.4 88.4 L849.5 101.4" fill="none" stroke="#444746" stroke-width="2.3"/><path d="M882 93.3 H902" stroke="#444746" stroke-width="2.1"/><path d="M888.4 91.3 A3.9 3.9 0 0 1 895.8 90.4" fill="none" stroke="#444746" stroke-width="2.1"/><path d="M888.3 97.2 C889 100.3 890.8 101 892.4 101 C894.6 101 896 99.6 896 96.4" fill="none" stroke="#444746" stroke-width="2.1"/><path d="M927.6 97.7 L931.5 86.3 H933.1 L937 97.7 M929.4 93.4 H935.2" fill="none" stroke="#444746" stroke-width="1.8" stroke-linejoin="round"/><path d="M976.6 81.3 L979.8 84.5" stroke="#444746" stroke-width="1.9"/><path d="M974.9 90.4 L980 85.3 L985.1 90.4 L980 95.5 Z" fill="none" stroke="#444746" stroke-width="1.9" stroke-linejoin="round"/><path d="M974.3 91.2 H985.7 L980 96.9 Z" fill="#444746"/><path d="M989.2 92.3 C988.2 93.8 987.3 94.8 987.3 95.6 A1.9 1.9 0 0 0 991.1 95.6 C991.1 94.8 990.2 93.8 989.2 92.3 Z" fill="#444746"/><rect x="1017.2" y="87.2" width="14.5" height="15.2" fill="none" stroke="#444746" stroke-width="2.4"/><path d="M1024.45 87 V102.6 M1017 94.8 H1031.9" stroke="#444746" stroke-width="2.2"/><path d="M1063.7 87 H1058.3 V101.8 H1063.7 M1069 87 H1074.4 V101.8 H1069" fill="none" stroke="#b7b9b9" stroke-width="2"/><path d="M1056 94.4 H1063.4 M1060.6 91.6 L1063.4 94.4 L1060.6 97.2 M1075.7 94.4 H1068.3 M1071.1 91.6 L1068.3 94.4 L1071.1 97.2" fill="none" stroke="#b7b9b9" stroke-width="2"/><path d="M1087 92 H1096.5 L1091.75 97 Z" fill="#b7b9b9"/><rect x="1117.8" y="86.2" width="17.4" height="1.9" fill="#444746"/><rect x="1121.6" y="89.95" width="10.2" height="1.9" fill="#444746"/><rect x="1117.8" y="93.95" width="17.4" height="1.9" fill="#444746"/><rect x="1121.6" y="97.89999999999999" width="10.2" height="1.9" fill="#444746"/><rect x="1117.8" y="101.89999999999999" width="17.4" height="1.9" fill="#444746"/><path d="M1143.7 92 H1153.9 L1148.8 97.4 Z" fill="#444746"/><rect x="1169.2" y="94" width="14.6" height="2" fill="#444746"/><path d="M1176.5 85 V91.5 M1173.4 88.4 L1176.5 91.5 L1179.6 88.4 M1176.5 105 V98.5 M1173.4 101.6 L1176.5 98.5 L1179.6 101.6" fill="none" stroke="#444746" stroke-width="1.9"/><path d="M1194.7 92 H1204.9 L1199.8 97.4 Z" fill="#444746"/><path d="M1221 86.8 V101.8 M1234 86.8 V101.8" stroke="#444746" stroke-width="1.9"/><path d="M1223.3 90.8 H1228 A2.9 2.9 0 0 1 1228 96.6 H1224.5 M1226.6 94.3 L1224.2 96.6 L1226.6 98.9" fill="none" stroke="#444746" stroke-width="1.9"/><path d="M1245 92 H1255.2 L1250.1 97.4 Z" fill="#444746"/><path d="M1273.1 97.4 L1277.7 86.4 L1282.1 97.4 M1274.9 93.4 H1280.5" fill="none" stroke="#444746" stroke-width="1.8"/><path d="M1270.9 100.5 H1286.4 M1283.3 97.6 L1286.2 100.5 L1283.3 103.4" fill="none" stroke="#444746" stroke-width="1.9"/><path d="M1296 92 H1306.2 L1301.1 97.4 Z" fill="#444746"/><path d="M1338.9 91 H1335.3 A4 4 0 0 0 1335.3 99 H1338.9 M1342 91 H1345.3 A4 4 0 0 1 1345.3 99 H1342 M1337.2 95 H1344" fill="none" stroke="#444746" stroke-width="2"/><path d="M1371.3 85.5 H1387.8 A0.8 0.8 0 0 1 1388.6 86.3 V98.8 A0.8 0.8 0 0 1 1387.8 99.6 H1373.6 L1370.5 102.5 V86.3 A0.8 0.8 0 0 1 1371.3 85.5 Z" fill="none" stroke="#444746" stroke-width="2"/><path d="M1379.4 88.3 V96.5 M1375.2 92.5 H1383.8" stroke="#444746" stroke-width="1.9"/><rect x="1411.3" y="86.9" width="15.5" height="15.1" rx="1.2" fill="none" stroke="#444746" stroke-width="2"/><path d="M1415.1 92.1 V99.3 M1418.9 89.7 V99.3 M1423 96.2 V99.3" stroke="#444746" stroke-width="2"/><path d="M1451 86.9 H1466.1 L1460.1 94.2 V102 H1457.1 V94.2 Z M1454.9 88.9 L1458.6 93.3 L1462.2 88.9 Z" fill="#444746" fill-rule="evenodd"/><path d="M1486.3 100.6 V87.2 A1.2 1.2 0 0 1 1487.5 86 H1501.1" fill="none" stroke="#444746" stroke-width="2"/><path d="M1491.1 89 H1502.9 A2 2 0 0 1 1504.9 91 V102.8 A2 2 0 0 1 1502.9 104.8 H1491.1 A2 2 0 0 1 1489.1 102.8 V91 A2 2 0 0 1 1491.1 89 Z M1490.8 91 V94.1 H1502.8 V91 Z M1490.8 96.2 V98.9 H1493.9 V96.2 Z M1495.9 96.2 V98.9 H1498.3 V96.2 Z M1500 96.2 V98.9 H1503.1 V96.2 Z M1490.8 100.6 V103.4 H1493.9 V100.6 Z M1495.9 100.6 V103.4 H1498.3 V100.6 Z M1500 100.6 V103.4 H1503.1 V100.6 Z" fill="#444746" fill-rule="evenodd"/><path d="M1512.8 92.1 H1523.0 L1517.8999999999999 97.5 Z" fill="#444746"/><path d="M1553.9 88.1 H1545.2 L1551.3 94.5 L1545.2 100.8 H1554.3" fill="none" stroke="#444746" stroke-width="2.4" stroke-linejoin="miter"/></svg>
</body></html>
